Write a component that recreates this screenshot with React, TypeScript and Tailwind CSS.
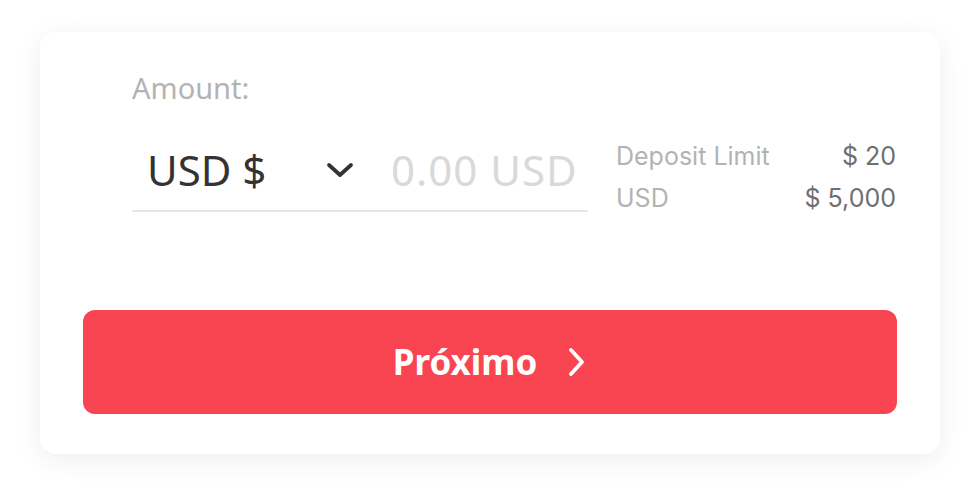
import React from 'react';

export default function App() {
  return (
    <div className="w-[980px] h-[503px] bg-white pt-[32px] pl-[40px]" style={{ fontFamily: '"Noto Sans", sans-serif' }}>
      <div className="w-[900px] h-[422px] rounded-2xl bg-white shadow-[0_6px_28px_rgba(0,0,0,0.07)] px-[43px] pt-[38px] flex flex-col">
        {/* Amount row */}
        <div className="pl-[49px] pr-[1px]">
          <p className="text-[29px] leading-[36px] text-[#b3b3b3]">Amount:</p>
          <div className="flex items-start h-[96px] mt-[10px]">
            <div className="w-[456px] h-[96px] pt-[14px] border-b-2 border-[#e4e7e7] flex items-center">
              <span className="ml-[15px] w-[179px] text-[42px] text-[#333] leading-none">USD $</span>
              <svg width="28" height="16" viewBox="0 0 28 16" className="text-[#333]">
                <path d="M3 3l11 10 11-10" fill="none" stroke="currentColor" strokeWidth="3.8" strokeLinecap="round" strokeLinejoin="round" />
              </svg>
              <span className="ml-[37px] text-[42px] tracking-[1px] text-[#d9d9d9] leading-none">0.00 USD</span>
            </div>
            <div className="flex-1 ml-[28px] pt-[19px] text-[25px] leading-[42px]" style={{ fontFamily: 'Inter, sans-serif' }}>
              <div className="flex justify-between">
                <span className="text-[#b3b3b3]">Deposit Limit</span>
                <span className="text-[#6f6f6f]">$ 20</span>
              </div>
              <div className="flex justify-between">
                <span className="text-[#b3b3b3]">USD</span>
                <span className="text-[#6f6f6f]">$ 5,000</span>
              </div>
            </div>
          </div>
        </div>

        {/* Next button */}
        <button className="mt-[98px] h-[104px] w-full rounded-[12px] bg-[#f94452] flex items-center justify-center gap-[30px] text-white">
          <span className="text-[35px] font-bold">Próximo</span>
          <svg width="20" height="30" viewBox="0 0 20 30">
            <path d="M4 3l11 12-11 12" fill="none" stroke="white" strokeWidth="3.8" strokeLinecap="round" strokeLinejoin="round" />
          </svg>
        </button>
      </div>
    </div>
  );
}
